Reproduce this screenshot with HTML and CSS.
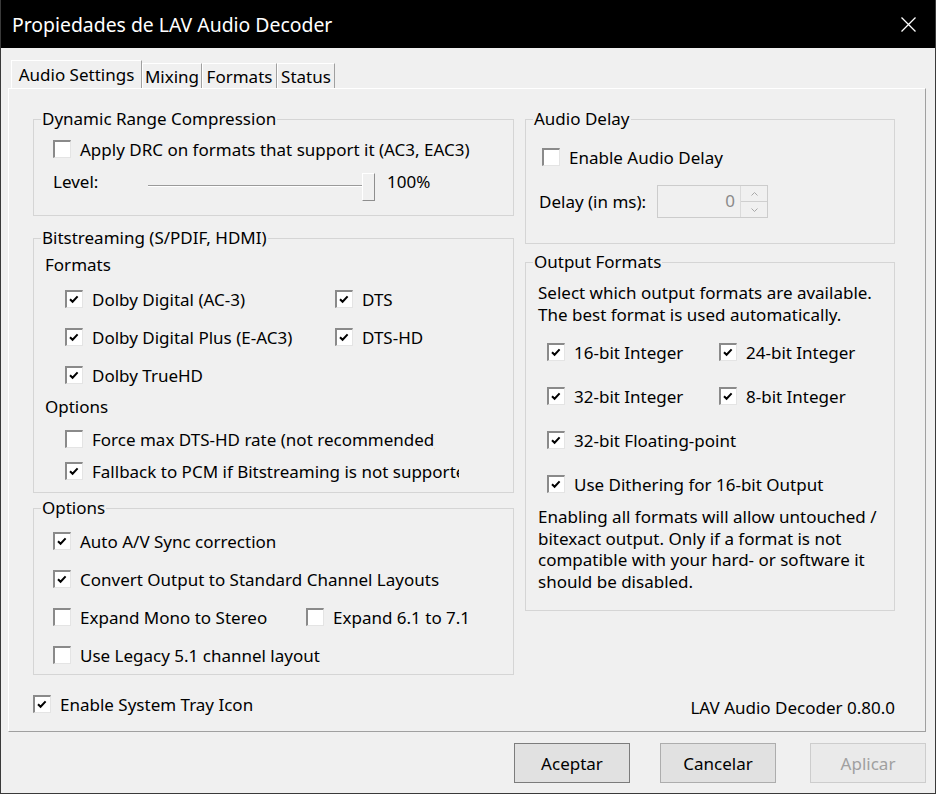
FILE: index.html
```html
<!DOCTYPE html>
<html lang="es">
<head>
<meta charset="utf-8">
<title>Propiedades de LAV Audio Decoder</title>
<link rel="stylesheet" href="styles.css">
</head>
<body>
<div class="window">
  <header class="titlebar">
    <span class="title">Propiedades de LAV Audio Decoder</span>
    <svg class="close" width="15" height="15" viewBox="0 0 15 15"><path d="M0.5 0.5 L14.5 14.5 M14.5 0.5 L0.5 14.5" stroke="#ffffff" stroke-width="1.3" fill="none"/></svg>
  </header>
  <div class="dialog">
    <nav class="tabs">
      <div class="tab tab-active tab-audio">Audio Settings</div>
      <div class="tab tab-mixing">Mixing</div>
      <div class="tab tab-formats">Formats</div>
      <div class="tab tab-status">Status</div>
    </nav>
    <section class="panel">
      <div class="columns">
        <div class="col col-left">
          <fieldset class="group group-drc">
            <legend>Dynamic Range Compression</legend>
            <div class="gbody drc-body">
              <div class="check row-drc"><span class="cb"></span><span class="lbl">Apply DRC on formats that support it (AC3, EAC3)</span></div>
              <div class="row-level">
                <span class="level-label">Level:</span>
                <div class="slider"><div class="track"></div><div class="thumb"></div></div>
                <span class="pct">100%</span>
              </div>
            </div>
          </fieldset>

          <fieldset class="group group-bits">
            <legend>Bitstreaming (S/PDIF, HDMI)</legend>
            <div class="gbody bits-body">
              <div class="sub sub-first">Formats</div>
              <div class="fmt-grid">
                <div class="check"><span class="cb"><svg width="15" height="15" viewBox="0 0 15 15"><path d="M3 7.2 L5.6 9.8 L10.6 4.4" stroke="#000" stroke-width="2" fill="none"/></svg></span><span class="lbl">Dolby Digital (AC-3)</span></div>
                <div class="check"><span class="cb"><svg width="15" height="15" viewBox="0 0 15 15"><path d="M3 7.2 L5.6 9.8 L10.6 4.4" stroke="#000" stroke-width="2" fill="none"/></svg></span><span class="lbl">DTS</span></div>
                <div class="check"><span class="cb"><svg width="15" height="15" viewBox="0 0 15 15"><path d="M3 7.2 L5.6 9.8 L10.6 4.4" stroke="#000" stroke-width="2" fill="none"/></svg></span><span class="lbl">Dolby Digital Plus (E-AC3)</span></div>
                <div class="check"><span class="cb"><svg width="15" height="15" viewBox="0 0 15 15"><path d="M3 7.2 L5.6 9.8 L10.6 4.4" stroke="#000" stroke-width="2" fill="none"/></svg></span><span class="lbl">DTS-HD</span></div>
                <div class="check"><span class="cb"><svg width="15" height="15" viewBox="0 0 15 15"><path d="M3 7.2 L5.6 9.8 L10.6 4.4" stroke="#000" stroke-width="2" fill="none"/></svg></span><span class="lbl">Dolby TrueHD</span></div>
              </div>
              <div class="sub sub-second">Options</div>
              <div class="opt-list">
                <div class="check opt-row"><span class="cb"></span><span class="lbl clip-a">Force max DTS-HD rate (not recommended)</span></div>
                <div class="check opt-row"><span class="cb"><svg width="15" height="15" viewBox="0 0 15 15"><path d="M3 7.2 L5.6 9.8 L10.6 4.4" stroke="#000" stroke-width="2" fill="none"/></svg></span><span class="lbl clip-b">Fallback to PCM if Bitstreaming is not supported</span></div>
              </div>
            </div>
          </fieldset>

          <fieldset class="group group-opts">
            <legend>Options</legend>
            <div class="gbody opts-body">
              <div class="check opts-row"><span class="cb"><svg width="15" height="15" viewBox="0 0 15 15"><path d="M3 7.2 L5.6 9.8 L10.6 4.4" stroke="#000" stroke-width="2" fill="none"/></svg></span><span class="lbl">Auto A/V Sync correction</span></div>
              <div class="check opts-row"><span class="cb"><svg width="15" height="15" viewBox="0 0 15 15"><path d="M3 7.2 L5.6 9.8 L10.6 4.4" stroke="#000" stroke-width="2" fill="none"/></svg></span><span class="lbl">Convert Output to Standard Channel Layouts</span></div>
              <div class="pair opts-row">
                <div class="check"><span class="cb"></span><span class="lbl">Expand Mono to Stereo</span></div>
                <div class="check"><span class="cb"></span><span class="lbl">Expand 6.1 to 7.1</span></div>
              </div>
              <div class="check opts-row"><span class="cb"></span><span class="lbl">Use Legacy 5.1 channel layout</span></div>
            </div>
          </fieldset>
        </div>

        <div class="col col-right">
          <fieldset class="group group-delay">
            <legend>Audio Delay</legend>
            <div class="gbody delay-body">
              <div class="check delay-check"><span class="cb"></span><span class="lbl">Enable Audio Delay</span></div>
              <div class="delay-row">
                <span class="delay-label">Delay (in ms):</span>
                <div class="spin">
                  <span class="spin-val">0</span>
                  <div class="spin-btns">
                    <span class="spin-btn"><svg width="7" height="4" viewBox="0 0 7 4"><path d="M0.5 3.5 L3.5 0.5 L6.5 3.5" stroke="#a8a8a8" stroke-width="1" fill="none"/></svg></span>
                    <span class="spin-btn"><svg width="7" height="4" viewBox="0 0 7 4"><path d="M0.5 0.5 L3.5 3.5 L6.5 0.5" stroke="#a8a8a8" stroke-width="1" fill="none"/></svg></span>
                  </div>
                </div>
              </div>
            </div>
          </fieldset>

          <fieldset class="group group-out">
            <legend>Output Formats</legend>
            <div class="gbody out-body">
              <p class="out-intro">Select which output formats are available.<br>The best format is used automatically.</p>
              <div class="out-grid">
                <div class="check"><span class="cb"><svg width="15" height="15" viewBox="0 0 15 15"><path d="M3 7.2 L5.6 9.8 L10.6 4.4" stroke="#000" stroke-width="2" fill="none"/></svg></span><span class="lbl">16-bit Integer</span></div>
                <div class="check"><span class="cb"><svg width="15" height="15" viewBox="0 0 15 15"><path d="M3 7.2 L5.6 9.8 L10.6 4.4" stroke="#000" stroke-width="2" fill="none"/></svg></span><span class="lbl">24-bit Integer</span></div>
                <div class="check"><span class="cb"><svg width="15" height="15" viewBox="0 0 15 15"><path d="M3 7.2 L5.6 9.8 L10.6 4.4" stroke="#000" stroke-width="2" fill="none"/></svg></span><span class="lbl">32-bit Integer</span></div>
                <div class="check"><span class="cb"><svg width="15" height="15" viewBox="0 0 15 15"><path d="M3 7.2 L5.6 9.8 L10.6 4.4" stroke="#000" stroke-width="2" fill="none"/></svg></span><span class="lbl">8-bit Integer</span></div>
                <div class="check span2"><span class="cb"><svg width="15" height="15" viewBox="0 0 15 15"><path d="M3 7.2 L5.6 9.8 L10.6 4.4" stroke="#000" stroke-width="2" fill="none"/></svg></span><span class="lbl">32-bit Floating-point</span></div>
                <div class="check span2"><span class="cb"><svg width="15" height="15" viewBox="0 0 15 15"><path d="M3 7.2 L5.6 9.8 L10.6 4.4" stroke="#000" stroke-width="2" fill="none"/></svg></span><span class="lbl">Use Dithering for 16-bit Output</span></div>
              </div>
              <p class="out-note">Enabling all formats will allow untouched /<br>bitexact output. Only if a format is not<br>compatible with your hard- or software it<br>should be disabled.</p>
            </div>
          </fieldset>
        </div>
      </div>

      <div class="footer">
        <div class="check"><span class="cb"><svg width="15" height="15" viewBox="0 0 15 15"><path d="M3 7.2 L5.6 9.8 L10.6 4.4" stroke="#000" stroke-width="2" fill="none"/></svg></span><span class="lbl">Enable System Tray Icon</span></div>
        <span class="version">LAV Audio Decoder 0.80.0</span>
      </div>
    </section>

    <div class="buttons">
      <button class="btn btn-default">Aceptar</button>
      <button class="btn">Cancelar</button>
      <button class="btn btn-apply" disabled>Aplicar</button>
    </div>
  </div>
</div>
</body>
</html>
```

FILE: styles.css
```css
* { box-sizing: border-box; }
html, body { margin: 0; padding: 0; }
body {
  width: 936px;
  height: 794px;
  overflow: hidden;
  background: #f0f0f0;
  font-family: "Noto Sans", "Liberation Sans", sans-serif;
  font-size: 17px;
  color: #000;
}
.window {
  width: 936px;
  height: 794px;
  display: flex;
  flex-direction: column;
  background: #f0f0f0;
  border: 1px solid #3a3a3a;
  border-top: none;
}
.titlebar {
  height: 48px;
  flex: none;
  background: #000;
  color: #fff;
  display: flex;
  align-items: center;
  justify-content: space-between;
  padding: 0 19px 0 11px;
}
.title { font-size: 19.4px; }
.close { display: block; }

.dialog {
  display: flex;
  flex-direction: column;
  padding: 12px 9px 10px 7px;
}

.tabs {
  display: flex;
  align-items: flex-end;
  height: 28px;
  padding-left: 3px;
}
.tab {
  height: 25px;
  display: flex;
  align-items: center;
  justify-content: center;
  white-space: nowrap;
  border-top: 1px solid #ffffff;
  border-left: 1px solid #ffffff;
  border-right: 1px solid #a0a0a0;
}
.tab-active { height: 28px; }
.tab-audio { width: 131px; }
.tab-mixing { width: 60px; }
.tab-formats { width: 75px; }
.tab-status { width: 58px; }

.panel {
  height: 644px;
  border: 1px solid;
  border-color: #ffffff #a0a0a0 #a0a0a0 #ffffff;
  padding: 20px 30px 0 24px;
  display: flex;
  flex-direction: column;
}
.columns {
  display: flex;
  gap: 11px;
  align-items: flex-start;
}
.col { display: flex; flex-direction: column; }
.col-left { width: 481px; }
.col-right { width: 370px; }

.group {
  margin: 0;
  padding: 0;
  min-width: 0;
  border: 1px solid #d5d5d5;
}
.group legend {
  margin-left: 7px;
  padding: 0 1px;
  height: 20px;
  line-height: 20px;
  white-space: nowrap;
}
.group-drc { height: 107px; }
.group-bits { height: 265px; margin-top: 12px; }
.group-opts { height: 177px; margin-top: 5px; }
.group-delay { height: 135px; }
.group-out { height: 359px; margin-top: 8px; }

.check {
  display: flex;
  align-items: center;
  gap: 9px;
  white-space: nowrap;
}
.cb {
  flex: none;
  width: 18px;
  height: 18px;
  background: #fff;
  border-style: solid;
  border-width: 2px 1px 1px 2px;
  border-color: #8a8a8a #e4e4e4 #e4e4e4 #8a8a8a;
}
.cb svg { display: block; }
.lbl { display: block; }

/* DRC */
.drc-body { padding-left: 19px; }
.row-drc { height: 40px; }
.row-level { display: flex; align-items: flex-start; height: 26px; }
.level-label { width: 95px; line-height: 26px; }
.slider { display: flex; height: 28px; margin-top: 4px; }
.track {
  width: 214px;
  height: 2px;
  margin-top: 12px;
  border-top: 1px solid #9a9a9a;
  border-bottom: 1px solid #ffffff;
}
.thumb {
  width: 13px;
  height: 28px;
  background: #f0f0f0;
  border: 1px solid;
  border-color: #ffffff #8e8e8e #8e8e8e #ffffff;
}
.pct { margin-left: 12px; line-height: 26px; }

/* Bitstreaming */
.bits-body { padding-left: 11px; }
.sub { height: 22px; line-height: 22px; }
.sub-first { margin-top: 6px; }
.sub-second { margin-top: 2px; }
.fmt-grid {
  display: grid;
  grid-template-columns: 270px auto;
  grid-auto-rows: 38px;
  margin-left: 20px;
  margin-top: 4px;
}
.opt-list { margin-left: 20px; margin-top: 5px; }
.opt-row { height: 32px; }
.clip-a { width: 343px; overflow: hidden; }
.clip-b { width: 367px; overflow: hidden; }

/* Options */
.opts-body { padding-left: 19px; padding-top: 4px; }
.opts-row { height: 38px; }
.pair { display: grid; grid-template-columns: 253px auto; align-items: center; }

/* Audio delay */
.delay-body { padding-left: 13px; padding-top: 8px; }
.delay-check { height: 40px; margin-left: 3px; }
.delay-row { display: flex; align-items: center; height: 33px; margin-top: 8px; }
.delay-label { width: 118px; }
.spin {
  display: flex;
  width: 111px;
  height: 33px;
  border: 1px solid #cccccc;
  background: #f0f0f0;
}
.spin-val {
  flex: 1;
  text-align: right;
  padding-right: 5px;
  line-height: 29px;
  color: #8a8a8a;
}
.spin-btns {
  width: 27px;
  display: flex;
  flex-direction: column;
  border-left: 1px solid #dadada;
}
.spin-btn {
  flex: 1;
  display: flex;
  align-items: center;
  justify-content: center;
}
.spin-btn + .spin-btn { border-top: 1px solid #cfcfcf; }

/* Output formats */
.out-body { padding-left: 12px; }
.out-intro { margin: 10px 0 0; line-height: 22px; white-space: nowrap; }
.out-grid {
  display: grid;
  grid-template-columns: 172px auto;
  grid-auto-rows: 44px;
  margin-left: 9px;
  margin-top: 4px;
}
.span2 { grid-column: 1 / span 2; }
.out-note { margin: 0; line-height: 21.7px; white-space: nowrap; }

/* Footer */
.footer {
  display: flex;
  justify-content: space-between;
  align-items: center;
  height: 24px;
  margin-top: 17px;
}
.version { margin-top: 6px; }

/* Buttons */
.buttons {
  display: flex;
  justify-content: flex-end;
  gap: 30px;
  margin-top: 11px;
}
.btn {
  width: 116px;
  height: 40px;
  font: inherit;
  color: #000;
  background: #e1e1e1;
  border: 1px solid #adadad;
  padding: 0;
}
.btn-default { border-color: #7c7c7c; }
.btn-apply {
  margin-left: 4px;
  color: #a0a0a0;
  background: #eaeaea;
  border-color: #cdcdcd;
}
```
